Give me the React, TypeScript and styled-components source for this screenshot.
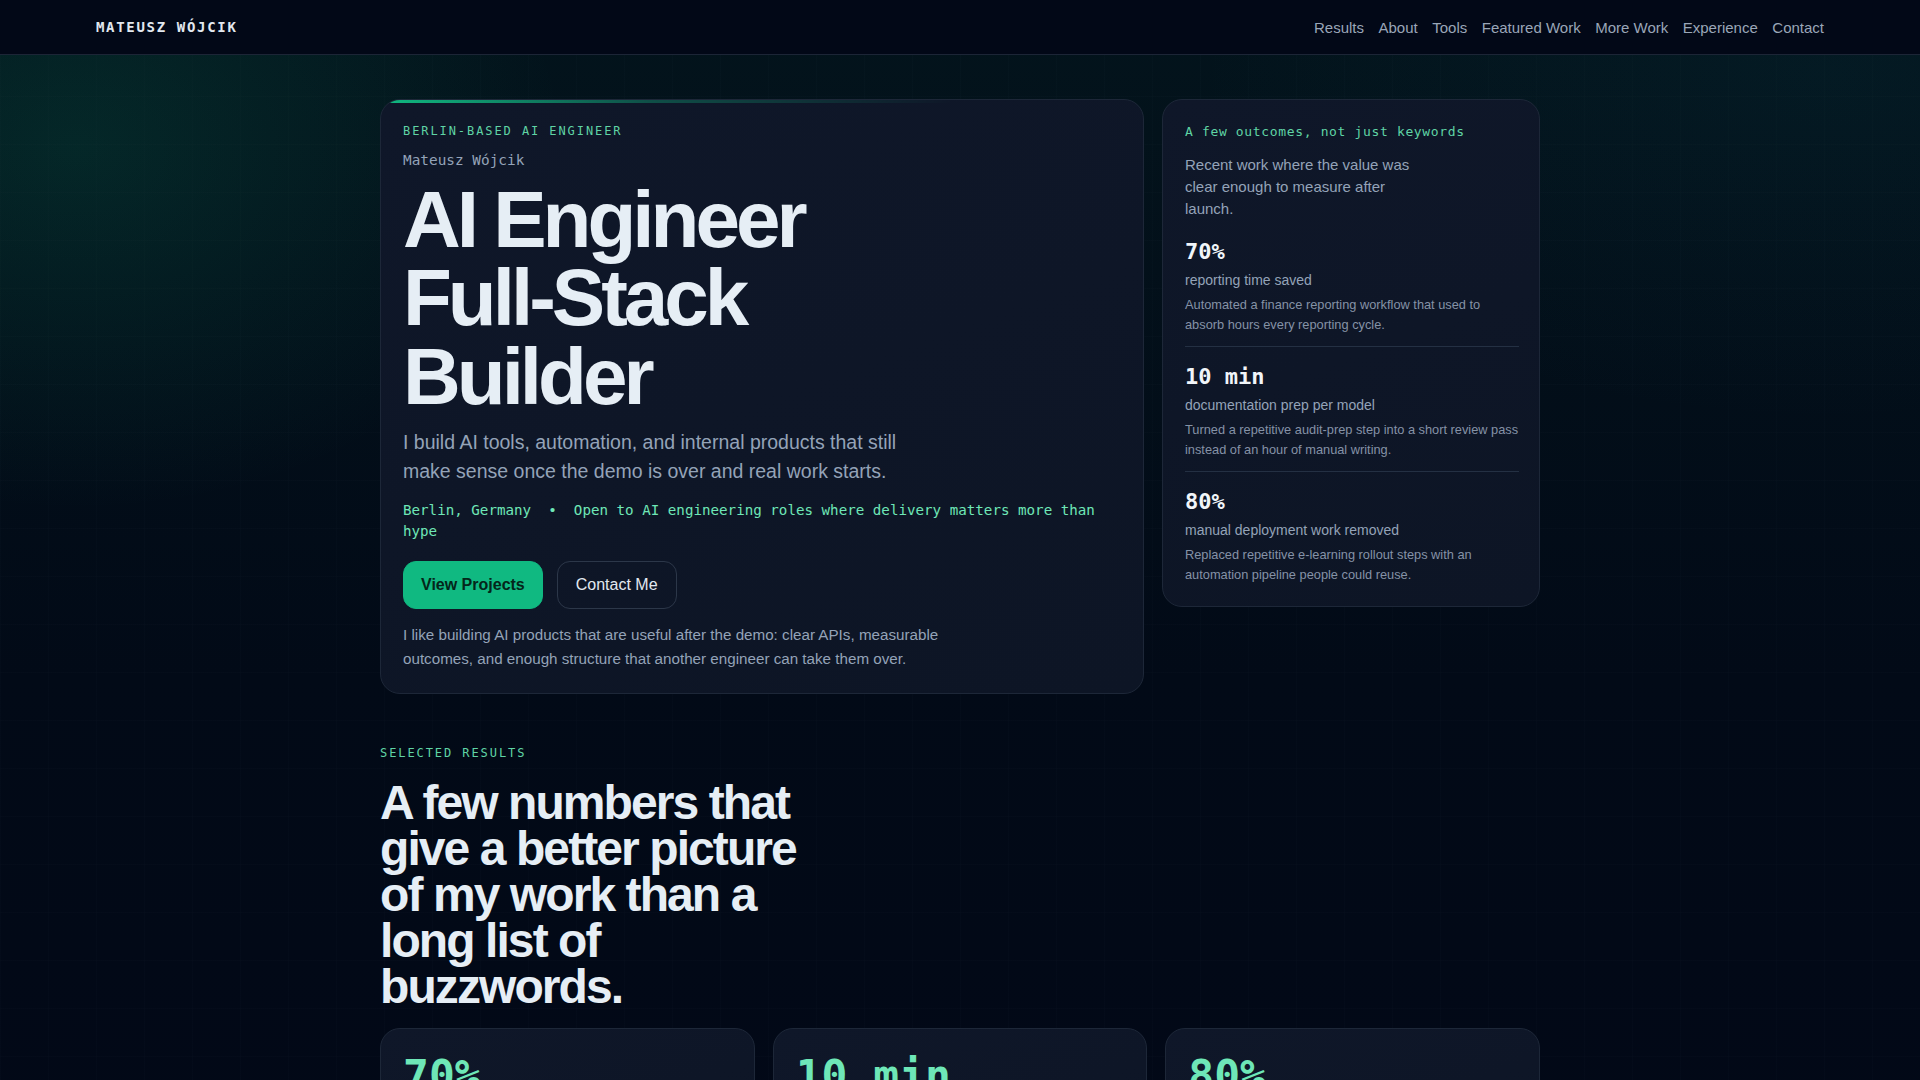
import React from 'react';
import styled, { createGlobalStyle } from 'styled-components';

const mono = `"DejaVu Sans Mono", "Liberation Mono", monospace`;
const sans = `"Liberation Sans", Arial, sans-serif`;

const GlobalStyle = createGlobalStyle`
  * {
    box-sizing: border-box;
  }
  html, body {
    margin: 0;
    padding: 0;
  }
  body {
    font-family: ${sans};
    color: #e2e8f0;
    background-color: #020817;
    background-image:
      radial-gradient(ellipse 700px 520px at 4% 12%, rgba(16, 185, 129, 0.13), transparent 70%),
      radial-gradient(ellipse 900px 500px at 95% 6%, rgba(20, 120, 140, 0.07), transparent 70%),
      linear-gradient(180deg, #03141c 0%, #020a17 55%, #020817 100%);
    min-height: 100vh;
  }
`;

const Page = styled.div`
  min-height: 100vh;
  background-image:
    linear-gradient(rgba(148, 163, 184, 0.016) 1px, transparent 1px),
    linear-gradient(90deg, rgba(148, 163, 184, 0.016) 1px, transparent 1px);
  background-size: 48px 48px;
`;

const Nav = styled.nav`
  height: 55px;
  padding: 0 96px;
  display: flex;
  align-items: center;
  justify-content: space-between;
  background: #020817;
  border-bottom: 1px solid #1c2536;
`;

const Logo = styled.a`
  font-family: ${mono};
  font-weight: bold;
  font-size: 14px;
  letter-spacing: 0.12em;
  color: #e2e8f0;
  text-decoration: none;
`;

const NavLinks = styled.div`
  display: flex;
  gap: 14.5px;
`;

const NavLink = styled.a`
  font-size: 15px;
  color: #9aa6b8;
  text-decoration: none;
`;

const Container = styled.main`
  max-width: 1160px;
  margin: 0 auto;
  padding: 44px 0 0;
`;

const HeroGrid = styled.section`
  display: grid;
  grid-template-columns: minmax(0, 1fr) 378px;
  gap: 18px;
  align-items: start;
`;

const Card = styled.div`
  position: relative;
  background: linear-gradient(160deg, #0f1729 0%, #0d1525 100%);
  border: 1px solid #1d2738;
  border-radius: 20px;
  padding: 22px;
  overflow: hidden;
`;

const HeroCard = styled(Card)`
  &::before {
    content: '';
    position: absolute;
    top: 0;
    left: 0;
    right: 0;
    height: 3px;
    background: linear-gradient(90deg, #10b981 0%, rgba(16, 185, 129, 0.35) 35%, transparent 75%);
  }
`;

const SideCard = styled(Card)`
  padding-right: 20px;
`;

const Eyebrow = styled.div`
  font-family: ${mono};
  font-size: 12px;
  line-height: 18px;
  letter-spacing: 0.16em;
  text-transform: uppercase;
  color: #5fd4a5;
`;

const Byline = styled.div`
  margin-top: 10px;
  font-family: ${mono};
  font-size: 14.4px;
  line-height: 21px;
  color: #94a3b8;
`;

const Title = styled.h1`
  margin: 10px 0 0;
  font-size: 80px;
  line-height: 0.98;
  font-weight: bold;
  letter-spacing: -0.05em;
  color: #e6eef5;
`;

const Lead = styled.p`
  margin: 12px 0 0;
  max-width: 530px;
  font-size: 19.5px;
  line-height: 29px;
  color: #94a3b8;
`;

const Meta = styled.p`
  margin: 14px 0 0;
  font-family: ${mono};
  font-size: 14.2px;
  line-height: 21px;
  color: #6ee7b7;
`;

const Actions = styled.div`
  margin-top: 19px;
  display: flex;
  gap: 14px;
`;

const Button = styled.a<{ $primary?: boolean }>`
  display: inline-flex;
  align-items: center;
  height: 48px;
  padding: 0 ${(p) => (p.$primary ? '17px' : '18px')};
  border-radius: 13px;
  font-size: 16px;
  font-weight: ${(p) => (p.$primary ? 'bold' : 'normal')};
  text-decoration: none;
  color: ${(p) => (p.$primary ? '#04261a' : '#e2e8f0')};
  background: ${(p) => (p.$primary ? '#10b981' : 'transparent')};
  border: 1px solid ${(p) => (p.$primary ? '#10b981' : '#2c3749')};
`;

const Note = styled.p`
  margin: 14px 0 0;
  max-width: 560px;
  font-size: 15.2px;
  line-height: 24px;
  color: #94a3b8;
`;

const SideTitle = styled.div`
  font-family: ${mono};
  font-size: 13px;
  line-height: 20px;
  letter-spacing: 0.05em;
  color: #5fd4a5;
`;

const SideIntro = styled.p`
  margin: 12px 0 2px;
  max-width: 236px;
  font-size: 15px;
  line-height: 22px;
  color: #94a3b8;
`;

const Outcome = styled.div`
  padding: 17px 0 12px;
  & + & {
    border-top: 1px solid #243043;
  }
  &:last-child {
    padding-bottom: 0;
  }
`;

const OutcomeValue = styled.div`
  font-family: ${mono};
  font-weight: bold;
  font-size: 22px;
  line-height: 26px;
  color: #f1f5f9;
`;

const OutcomeLabel = styled.div`
  margin-top: 5px;
  font-size: 14px;
  line-height: 21px;
  color: #94a3b8;
`;

const OutcomeText = styled.p`
  margin: 4px 0 0;
  font-size: 12.8px;
  line-height: 19.5px;
  color: #8592a6;
`;

const Results = styled.section`
  margin-top: 50px;
`;

const ResultsTitle = styled.h2`
  margin: 18px 0 0;
  max-width: 440px;
  font-size: 48px;
  line-height: 46px;
  font-weight: bold;
  letter-spacing: -0.04em;
  color: #e6eef5;
`;

const StatGrid = styled.div`
  margin-top: 18px;
  display: grid;
  grid-template-columns: repeat(3, 1fr);
  gap: 18px;
`;

const StatCard = styled(Card)`
  padding-top: 23px;
  min-height: 200px;
`;

const StatValue = styled.div`
  font-family: ${mono};
  font-weight: bold;
  font-size: 43px;
  line-height: 1.1;
  color: #6ee7b7;
`;

const navItems = ['Results', 'About', 'Tools', 'Featured Work', 'More Work', 'Experience', 'Contact'];

const outcomes = [
  {
    value: '70%',
    label: 'reporting time saved',
    text: 'Automated a finance reporting workflow that used to absorb hours every reporting cycle.',
  },
  {
    value: '10 min',
    label: 'documentation prep per model',
    text: 'Turned a repetitive audit-prep step into a short review pass instead of an hour of manual writing.',
  },
  {
    value: '80%',
    label: 'manual deployment work removed',
    text: 'Replaced repetitive e-learning rollout steps with an automation pipeline people could reuse.',
  },
];

export default function App() {
  return (
    <Page>
      <GlobalStyle />
      <Nav>
        <Logo href="#">MATEUSZ WÓJCIK</Logo>
        <NavLinks>
          {navItems.map((item) => (
            <NavLink key={item} href="#">
              {item}
            </NavLink>
          ))}
        </NavLinks>
      </Nav>
      <Container>
        <HeroGrid>
          <HeroCard>
            <Eyebrow>Berlin-based AI engineer</Eyebrow>
            <Byline>Mateusz Wójcik</Byline>
            <Title>
              AI Engineer
              <br />
              Full-Stack
              <br />
              Builder
            </Title>
            <Lead>
              I build AI tools, automation, and internal products that still make sense once the demo is over and
              real work starts.
            </Lead>
            <Meta>Berlin, Germany{'\u00a0 •\u00a0 '}Open to AI engineering roles where delivery matters more than hype</Meta>
            <Actions>
              <Button $primary href="#">
                View Projects
              </Button>
              <Button href="#">Contact Me</Button>
            </Actions>
            <Note>
              I like building AI products that are useful after the demo: clear APIs, measurable outcomes, and enough
              structure that another engineer can take them over.
            </Note>
          </HeroCard>
          <SideCard>
            <SideTitle>A few outcomes, not just keywords</SideTitle>
            <SideIntro>Recent work where the value was clear enough to measure after launch.</SideIntro>
            {outcomes.map((o) => (
              <Outcome key={o.value}>
                <OutcomeValue>{o.value}</OutcomeValue>
                <OutcomeLabel>{o.label}</OutcomeLabel>
                <OutcomeText>{o.text}</OutcomeText>
              </Outcome>
            ))}
          </SideCard>
        </HeroGrid>
        <Results>
          <Eyebrow>Selected results</Eyebrow>
          <ResultsTitle>A few numbers that give a better picture of my work than a long list of buzzwords.</ResultsTitle>
          <StatGrid>
            {outcomes.map((o) => (
              <StatCard key={o.value}>
                <StatValue>{o.value}</StatValue>
              </StatCard>
            ))}
          </StatGrid>
        </Results>
      </Container>
    </Page>
  );
}
